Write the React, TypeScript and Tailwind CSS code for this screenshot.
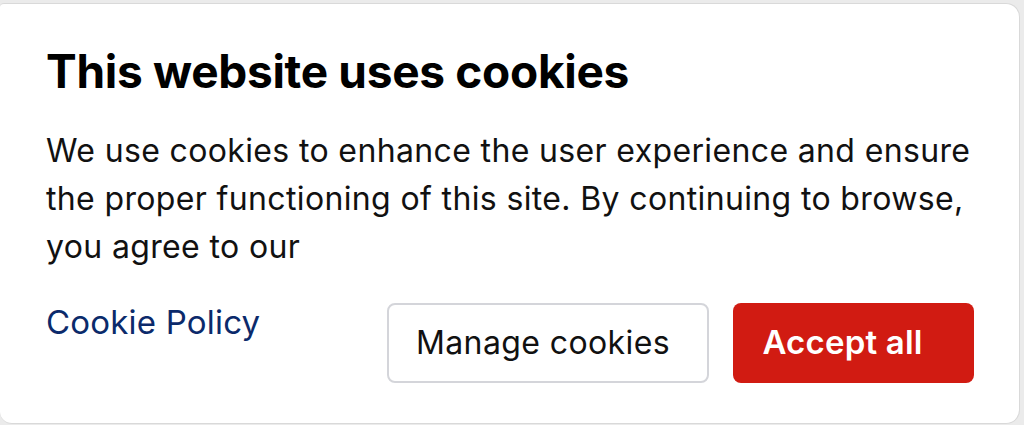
import React from "react";

export default function App() {
  return (
    <div className="w-[1024px] h-[425px] overflow-hidden bg-[#ebebeb] pt-[3px] pr-[4px]" style={{ fontFamily: "Inter, 'Noto Sans', sans-serif" }}>
      <div className="h-[421px] bg-white rounded-r-[14px] rounded-bl-[12px] rounded-tl-[4px] border border-[#d9d9d9] border-l-0 pl-[46px] pr-[45px] pt-[42px]">
        <h1 className="text-[46px] leading-[50px] font-bold text-black tracking-[-0.3px]">This website uses cookies</h1>
        <p className="mt-[31px] text-[32px] leading-[48px] text-[#111] tracking-[0.36px]">
          We use cookies to enhance the user experience and ensure the proper functioning of this site. By continuing to browse, you agree to our
        </p>
        <div className="mt-[27px] flex items-start justify-between">
          <a className="text-[33px] leading-[48px] text-[#0b2a6b] tracking-[0.2px]">Cookie Policy</a>
          <div className="flex gap-[24px] mt-[5px]">
            <button className="w-[322px] h-[80px] rounded-[8px] border-2 border-[#d4d5da] bg-white text-[32px] text-[#111] tracking-[0.4px] pr-[10px]">Manage cookies</button>
            <button className="w-[241px] h-[80px] rounded-[8px] bg-[#d11b12] text-[33px] font-semibold text-white tracking-[0.2px] pr-[22px]">Accept all</button>
          </div>
        </div>
      </div>
    </div>
  );
}
